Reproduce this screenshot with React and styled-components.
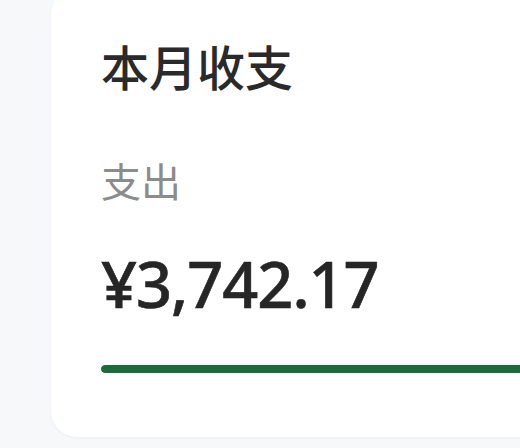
import React from 'react';
import styled, { createGlobalStyle } from 'styled-components';

const GlobalStyle = createGlobalStyle`
  html, body {
    margin: 0;
    padding: 0;
    background: #f7f8fa;
    overflow: hidden;
  }
  body {
    font-family: "Noto Sans", "Noto Sans CJK SC", sans-serif;
  }
`;

const Page = styled.div`
  width: 520px;
  height: 448px;
  padding: 0 0 0 51px;
  box-sizing: border-box;
  overflow: hidden;
`;

const Card = styled.section`
  width: 520px;
  height: 449px;
  margin-top: -12px;
  box-sizing: border-box;
  padding: 49px 0 0 50px;
  background: #ffffff;
  border-radius: 26px;
  box-shadow: 0 1px 3px rgba(20, 30, 60, 0.05);
  display: flex;
  flex-direction: column;
`;

const Title = styled.h2`
  margin: 0;
  font-family: "Noto Sans CJK SC", sans-serif;
  font-size: 48px;
  line-height: 56px;
  font-weight: 500;
  color: #2a2a2a;
`;

const Label = styled.div`
  margin-top: 63px;
  font-family: "Noto Sans CJK SC", sans-serif;
  font-size: 40px;
  line-height: 48px;
  font-weight: 400;
  color: #8c8c8c;
`;

const Amount = styled.div`
  margin-top: 44px;
  font-family: "Noto Sans", "Noto Sans CJK SC", sans-serif;
  font-size: 63px;
  line-height: 72px;
  font-weight: 500;
  letter-spacing: -1px;
  color: #262626;
  -webkit-text-stroke: 0.6px #262626;
`;

const Track = styled.div`
  margin-top: 45px;
  width: 424px;
  height: 8px;
  border-radius: 4px;
  background: #e9ecef;
  overflow: hidden;
`;

const Fill = styled.div`
  height: 100%;
  border-radius: 4px;
  background: #1b6b3d;
`;

export default function App() {
  const ratio = 1;
  return (
    <>
      <GlobalStyle />
      <Page>
        <Card>
          <Title>本月收支</Title>
          <Label>支出</Label>
          <Amount>¥3,742.17</Amount>
          <Track>
            <Fill style={{ width: `${ratio * 100}%` }} />
          </Track>
        </Card>
      </Page>
    </>
  );
}
